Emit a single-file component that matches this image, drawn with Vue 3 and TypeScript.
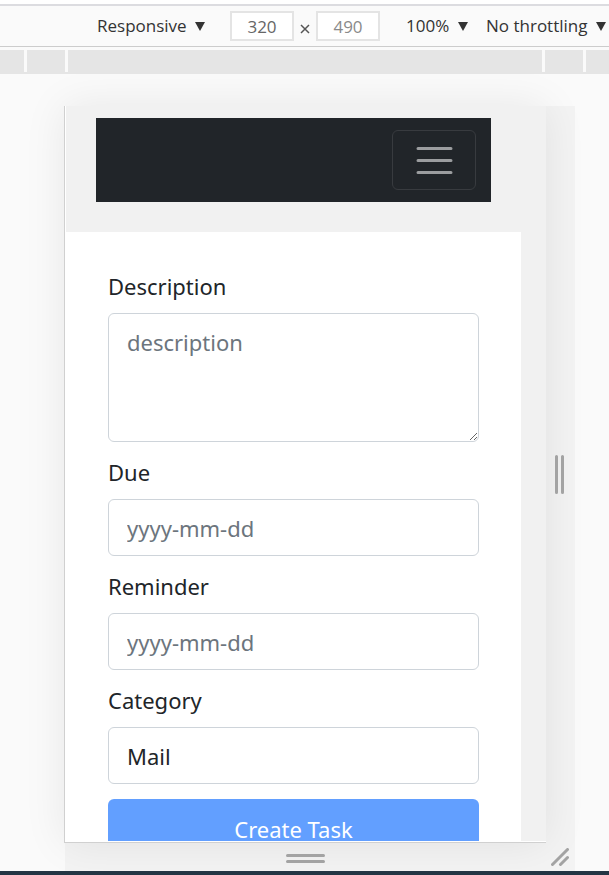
<script setup lang="ts">
import { ref } from 'vue'

interface DateField {
  id: string
  label: string
}

const dateFields: DateField[] = [
  { id: 'due', label: 'Due' },
  { id: 'reminder', label: 'Reminder' },
]

const width = ref('320')
const height = ref('490')
const category = ref('Mail')
</script>

<template>
  <div class="tools">
    <header class="toolbar">
      <label class="picker device-picker">
        <select aria-label="Device"><option>Responsive</option></select>
        <svg class="arrow" viewBox="0 0 10 9" aria-hidden="true"><path d="M0 0H10L5 9Z" /></svg>
      </label>
      <div class="size">
        <input v-model="width" type="text" aria-label="Width" />
        <svg class="times" viewBox="0 0 10 10" aria-hidden="true"><path d="M1 1L9 9M9 1L1 9" /></svg>
        <input v-model="height" class="muted" type="text" aria-label="Height" />
      </div>
      <label class="picker">
        <select aria-label="Zoom"><option>100%</option></select>
        <svg class="arrow" viewBox="0 0 10 9" aria-hidden="true"><path d="M0 0H10L5 9Z" /></svg>
      </label>
      <label class="picker">
        <select aria-label="Throttling"><option>No throttling</option></select>
        <svg class="arrow" viewBox="0 0 10 9" aria-hidden="true"><path d="M0 0H10L5 9Z" /></svg>
      </label>
    </header>

    <div class="ruler"><span /><span /><span /><span /><span /></div>

    <div class="canvas">
      <main class="device">
        <div class="page">
          <nav class="navbar">
            <button class="toggler" type="button" aria-label="Toggle navigation">
              <svg viewBox="0 0 30 30" aria-hidden="true"><path d="M4 7h22M4 15h22M4 23h22" /></svg>
            </button>
          </nav>
          <form class="card" @submit.prevent>
            <div class="field">
              <label for="description">Description</label>
              <textarea id="description" placeholder="description"></textarea>
            </div>
            <div v-for="field in dateFields" :key="field.id" class="field">
              <label :for="field.id">{{ field.label }}</label>
              <input :id="field.id" type="text" placeholder="yyyy-mm-dd" />
            </div>
            <div class="field">
              <label for="category">Category</label>
              <select id="category" v-model="category"><option>Mail</option></select>
            </div>
            <button class="submit" type="submit">Create Task</button>
          </form>
        </div>
      </main>
      <div class="handle right">
        <svg width="9" height="39" viewBox="0 0 9 39" aria-hidden="true"><path d="M1.5 1.5V37.5M7.5 1.5V37.5" /></svg>
      </div>
      <div class="handle bottom">
        <svg width="39" height="9" viewBox="0 0 39 9" aria-hidden="true"><path d="M1.5 1.5H37.5M1.5 7.5H37.5" /></svg>
      </div>
      <div class="handle corner">
        <svg width="18" height="18" viewBox="0 0 18 18" aria-hidden="true"><path d="M1.5 16.5L16.5 1.5M9.5 16.5L16.5 9.5" /></svg>
      </div>
    </div>
    <footer class="strip"></footer>
  </div>
</template>

<style>
body {
  margin: 0;
  background: #fafafa;
}
</style>

<style scoped>
* {
  box-sizing: border-box;
}

.tools {
  display: flex;
  flex-direction: column;
  height: 100vh;
  overflow: hidden;
  border-top: 4px solid #fff;
  background: #fafafa;
  font-family: "Segoe UI", "Noto Sans", "Open Sans", sans-serif;
}

input,
select,
textarea,
button {
  margin: 0;
  font: inherit;
}

.toolbar {
  display: flex;
  flex: none;
  align-items: center;
  height: 43px;
  padding-left: 97px;
  border-top: 2px solid #dcdce0;
  border-bottom: 1px solid #ccc;
  font-family: "Segoe UI", "Open Sans", "Noto Sans", sans-serif;
  font-size: 17px;
  line-height: 24px;
  color: #333;
  white-space: nowrap;
}

.picker {
  display: flex;
  flex: none;
  align-items: center;
  gap: 8px;
  margin-right: 18px;
}

.device-picker {
  margin-right: 25px;
}

.picker select {
  appearance: none;
  padding: 0;
  border: 0;
  background: none;
  color: inherit;
}

.arrow {
  width: 10px;
  height: 9px;
  fill: #333;
}

.size {
  display: flex;
  flex: none;
  align-items: center;
  gap: 6px;
  margin-right: 26px;
}

.size input {
  width: 64px;
  height: 30px;
  padding: 0;
  border: 2px solid #e4e4e4;
  background: #fff;
  color: #666;
  text-align: center;
}

.size .muted {
  color: #8a8a8a;
}

.times {
  width: 10px;
  height: 10px;
  margin-top: 6px;
  fill: none;
  stroke: #555;
  stroke-width: 1.5;
}

.ruler {
  display: grid;
  flex: none;
  grid-template-columns: 24px 38px 1fr 38px 23px;
  gap: 3px;
  height: 24px;
  margin-top: 3px;
  border-bottom: 2px solid #e5e5e5;
}

.ruler span {
  background: #e5e5e5;
}

.canvas {
  display: grid;
  flex: 1;
  grid-template-rows: 32px minmax(0, 1fr) 28px;
  grid-template-columns: 64px minmax(0, 1fr) 29px 34px;
  min-height: 0;
  overflow: hidden;
}

.device {
  grid-area: 2 / 2;
  padding: 0 0 1px 1px;
  overflow: hidden;
  border-bottom: 1px solid #d0d0d0;
  border-left: 1px solid #d0d0d0;
  background: #fff;
  box-shadow: 0 0 40px rgba(0, 0, 0, 0.08);
}

.page {
  height: 100%;
  padding: 12px 25px 0 0;
  overflow: hidden;
  background: #f1f1f1;
}

.navbar {
  display: flex;
  justify-content: flex-end;
  margin: 0 30px 30px;
  padding: 12px 15px;
  background: #212529;
}

.toggler {
  display: grid;
  place-items: center;
  width: 84px;
  height: 60px;
  padding: 1px 0 0 1px;
  border: 1px solid #383b3f;
  border-radius: 6px;
  background: none;
}

.toggler svg {
  width: 45px;
  height: 45px;
  fill: none;
  stroke: #9b9d9f;
  stroke-width: 2;
  stroke-linecap: round;
}

.card {
  padding: 36px 42px;
  background: #fff;
  color: #212529;
  font-size: 22px;
  line-height: 36px;
}

.field {
  display: flex;
  flex-direction: column;
  gap: 9px;
  margin-bottom: 12px;
}

.field input,
.field select,
.field textarea {
  appearance: none;
  width: 100%;
  height: 57px;
  padding: 10px 18px;
  border: 1px solid #ced4da;
  border-radius: 6px;
  background: #fff;
  color: #212529;
}

.field textarea {
  display: block;
  height: 129px;
  resize: vertical;
}

.field ::placeholder {
  color: #6c757d;
  opacity: 1;
}

.submit {
  display: block;
  width: 100%;
  height: 60px;
  margin-top: 15px;
  padding: 0;
  border: 0;
  border-radius: 6px;
  background: #629fff;
  color: #fff;
}

.handle {
  z-index: 1;
  display: grid;
  place-items: center;
  background: rgba(0, 0, 0, 0.028);
}

.handle svg {
  fill: none;
  stroke: #a3a3a3;
  stroke-width: 3;
  stroke-linecap: round;
}

.right {
  grid-area: 2 / 3;
  padding-right: 2px;
}

.bottom {
  grid-area: 3 / 2;
  margin-left: 1px;
  padding-top: 3px;
}

.corner {
  grid-area: 3 / 3;
  padding-right: 1px;
}

.strip {
  flex: none;
  height: 4px;
  background: #233544;
}
</style>
